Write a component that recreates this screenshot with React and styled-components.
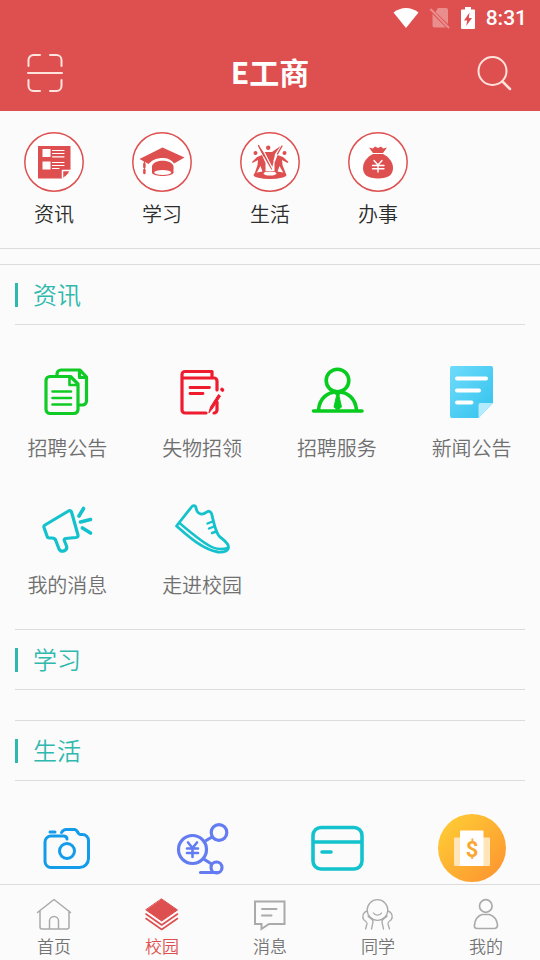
import React from 'react';
import styled, { createGlobalStyle } from 'styled-components';

const RED = '#de5050';
const TEAL = '#2fb9ae';
const CYAN = '#13c2cc';

const GlobalStyle = createGlobalStyle`
  * {
    box-sizing: border-box;
  }
  body {
    margin: 0;
    background: #fbfbfb;
    font-family: "Noto Sans CJK SC", "Noto Sans", sans-serif;
    font-weight: 350;
  }
  button {
    padding: 0;
    border: 0;
    background: none;
    font-family: inherit;
    font-weight: inherit;
    cursor: pointer;
  }
`;

const Page = styled.div`
  display: flex;
  flex-direction: column;
  height: 100vh;
`;

const StatusBar = styled.div`
  display: flex;
  justify-content: flex-end;
  align-items: center;
  gap: 11px;
  height: 36px;
  padding-right: 13px;
  background: ${RED};
  color: white;
  font: 500 21px/36px Roboto, sans-serif;
`;

const Header = styled.header`
  display: grid;
  grid-template-columns: 36px 1fr 36px;
  align-items: center;
  height: 75px;
  padding: 0 27px 2px;
  background: ${RED};
  color: white;
`;

const Title = styled.h1`
  margin: 0;
  padding-bottom: 3px;
  font-size: 30px;
  line-height: 44px;
  font-weight: 700;
  text-align: center;
`;

const HeaderButton = styled.button`
  display: block;
  height: 38px;
  color: #ffe3dc;
`;

const Main = styled.main`
  flex: 1;
  min-height: 0;
  overflow: hidden;
`;

const QuickNav = styled.nav`
  display: grid;
  grid-template-columns: repeat(5, 1fr);
  padding: 21px 0 19px;
`;

const QuickItem = styled.button`
  display: flex;
  flex-direction: column;
  align-items: center;
  gap: 7px;
  color: #2c2c2c;
  font-size: 20px;
  line-height: 30px;
`;

const Divider = styled.div`
  height: 17px;
  border-top: 1px solid #dcdcdc;
  border-bottom: 1px solid #dcdcdc;
`;

const Section = styled.section`
  & + & > header {
    border-top: 1px solid #dcdcdc;
  }
`;

const SectionHead = styled.header`
  margin: 0 15px;
  padding: 18px 0 17px;
  border-bottom: 1px solid #dcdcdc;
`;

const SectionTitle = styled.h2`
  margin: 0;
  padding: 0 0 2px 15px;
  border-left: 3px solid ${TEAL};
  color: ${TEAL};
  font-size: 24px;
  line-height: 22px;
  font-weight: inherit;
`;

const TileGrid = styled.div`
  display: grid;
  grid-template-columns: repeat(4, 1fr);
  padding: 16px 1px 14px 0;
`;

const Tile = styled.button`
  display: flex;
  flex-direction: column;
  align-items: center;
  gap: 7px;
  padding: 17px 0 15px;
  color: #707070;
  font-size: 20px;
  line-height: 30px;
`;

const TabBar = styled.nav`
  display: grid;
  grid-template-columns: repeat(5, 1fr);
  height: 76px;
  border-top: 1px solid #dcdcdc;
`;

const Tab = styled.button`
  display: flex;
  flex-direction: column;
  align-items: center;
  gap: 1px;
  padding-top: 12px;
  color: ${props => props.$active ? RED : '#757575'};
  font-size: 17px;
  line-height: 24px;

  svg {
    color: ${props => props.$active ? RED : '#aaa'};
  }
`;

const Svg = ({ w, h, children, ...rest }) => (
  <svg
    width={w}
    height={h || w}
    viewBox={`0 0 ${w} ${h || w}`}
    fill="none"
    strokeLinecap="round"
    strokeLinejoin="round"
    aria-hidden="true"
    {...rest}
  >
    {children}
  </svg>
);

/* status bar and header */

const WifiIcon = () => (
  <Svg w={26} h={22}>
    <path d="M0.5 5.5C8 -0.5 18 -0.5 25.5 5.5L13 21Z" fill="white" />
  </Svg>
);

const NoSimIcon = () => (
  <Svg w={20} h={22} opacity="0.35">
    <path d="M8 1h8a2 2 0 0 1 2 2v14L5.500 5ZM2.500 7l13.500 13.500H4.500a2 2 0 0 1-2-2Z" fill="white" />
    <path d="M1 2.500L18.500 20.500" stroke="white" strokeWidth="2" />
  </Svg>
);

const BatteryIcon = () => (
  <Svg w={14} h={22}>
    <path d="M4 0h6v2.500h3a1 1 0 0 1 1 1V21a1 1 0 0 1-1 1H1a1 1 0 0 1-1-1V3.500a1 1 0 0 1 1-1h3Z" fill="white" />
    <path d="M8.500 5.500L3 13.500h3.200L5.200 19L11 11H7.800Z" fill={RED} />
  </Svg>
);

const ScanIcon = () => (
  <Svg w={36} h={38} stroke="currentColor" strokeWidth="2">
    <path d="M1.500 12V6a5 5 0 0 1 5-5H13M23 1h6.500a5 5 0 0 1 5 5v6M1.500 26v6a5 5 0 0 0 5 5H13M23 37h6.500a5 5 0 0 0 5-5v-6M1 19h34" />
  </Svg>
);

const SearchIcon = () => (
  <Svg w={36} h={38} stroke="currentColor" strokeWidth="2">
    <circle cx="15.500" cy="17" r="14" />
    <path d="M25.500 27.500L33 35" strokeWidth="2.500" />
  </Svg>
);

/* round icons of the quick navigation */

const Ring = ({ children }) => (
  <Svg w={60}>
    <circle cx="30" cy="30" r="29.200" fill="white" stroke={RED} strokeWidth="1.500" />
    {children}
  </Svg>
);

const NewsRing = () => (
  <Ring>
    <path d="M14 14H46.500V38L38.500 46.500H14Z" fill={RED} />
    <path d="M18.500 17H26.500V25H18.500ZM18.500 29.500H26.500V37.500H18.500Z" fill="white" />
    <path d="M28.500 18.500H40M28.500 21.500H40M28.500 24.800H40M28.500 30.500H40M28.500 33.500H40M28.500 36.500H35" stroke="white" strokeWidth="1.200" />
    <path d="M38.500 46V38.500H46.500" stroke="white" strokeWidth="1.500" />
    <path d="M40.500 45V40.500H45Z" fill={RED} />
  </Ring>
);

const StudyRing = () => (
  <Ring>
    <path d="M7.500 27L30.500 15.500L52.500 25.500L42 31.500C38 24 23 24 16.500 32Z" fill={RED} />
    <path d="M20 34C22 27 39 27 41.500 34V41C39 45 22 45 20 41Z" fill={RED} />
    <ellipse cx="30.700" cy="40.500" rx="8.500" ry="2.400" fill="white" />
    <path d="M12.400 27V41" stroke={RED} strokeWidth="1" />
    <path d="M12.400 32V35M12.400 38V41" stroke={RED} strokeWidth="2.500" />
  </Ring>
);

const LifeRing = () => (
  <Ring>
    <ellipse cx="30" cy="43" rx="16.500" ry="4" fill={RED} />
    <ellipse cx="30" cy="41.500" rx="6.500" ry="2" fill="white" />
    <g fill={RED}>
      <circle cx="15.500" cy="21" r="2" />
      <circle cx="28.200" cy="15.800" r="2.200" />
      <circle cx="44.500" cy="21" r="2" />
      <path d="M12 30L17 25L22 23L25.500 31V39L23 41L20.500 34L16 42H14.500L17.500 33L18 28L12.500 31Z" />
      <path d="M18 14L24 20L32 20L40.500 14L35 22L34 28L31.500 38L24 25Z" />
      <path d="M48.500 30L43 25L37.500 23L34.500 31V39L37 41L39.500 34L44 42H46L42.500 33L42 28L47.500 31Z" />
    </g>
    <path d="M21 14L33 37.500M37.500 21.500L34 28.500" stroke="white" strokeWidth="1.200" />
    <path d="M18.500 13.500L24 24M42 14L37.500 22" stroke={RED} strokeWidth="1.400" />
  </Ring>
);

const WorkRing = () => (
  <Ring>
    <path d="M21 15.500L25 16.500L27 14.500L30 16L33 14.500L35 16.500L39 15.500L35 21H25Z" fill={RED} />
    <path d="M25 22H35C41 25 45 30 45 36C45 43 40 46.500 30 46.500S15 43 15 36C15 30 19 25 25 22Z" fill={RED} />
    <path d="M26 28.500L30 33L34 28.500M24.500 33.500H36M24.500 36.800H36M30 33V40" stroke="white" strokeWidth="1.400" />
  </Ring>
);

/* tile icons */

const CopyDocsIcon = () => (
  <Svg w={68} stroke="#10cb26" strokeWidth="3.200">
    <path d="M24 18V16a4 4 0 0 1 4-4H47L53.500 19V43a4 4 0 0 1-4 4H46" />
    <path d="M46.500 13V19.500H53" />
    <path d="M17 18.500H37.500L45 26V51.500a4 4 0 0 1-4 4H17a4 4 0 0 1-4-4V22.500a4 4 0 0 1 4-4Z" />
    <path d="M36.500 19.500V27H44M19.500 33.500H38M19.500 40H38M19.500 46.500H38" strokeWidth="2.600" />
  </Svg>
);

const NotebookIcon = () => (
  <Svg w={68} stroke="#ee1c2e" strokeWidth="3.200">
    <path d="M49 32V23a3 3 0 0 0-3-3H14M44 19V13.500H17a3 3 0 0 0-3 3V52a3 3 0 0 0 3 3H38M49 44V52a3 3 0 0 1-3 3" />
    <path d="M22 29.500H41.500M22 35.500H35" strokeWidth="2.800" />
    <path d="M41 54.500L42.500 49L50.500 36.500L52.500 38L44.500 50.500Z" fill="#ee1c2e" strokeWidth="1" />
    <path d="M54 31.500L54.500 32" strokeWidth="3.600" />
  </Svg>
);

const ServiceIcon = () => (
  <Svg w={68} stroke="#08cb20" strokeWidth="3.600">
    <circle cx="34.500" cy="22.500" r="11.300" />
    <path d="M15.500 52C16.500 41 23.500 34 34.500 34S52.500 41 53.500 52M10.500 53H59" />
    <path d="M32.500 35.500H36.500L36 38L38.500 49L34.500 52L31 49L33.500 38Z" fill="#08cb20" strokeWidth="1" />
  </Svg>
);

const NoticeIcon = () => (
  <Svg w={68}>
    <defs>
      <linearGradient id="notice" x1="0" y1="0" x2="1" y2="1">
        <stop offset="0" stopColor="#6edbfb" />
        <stop offset="1" stopColor="#33c2ee" />
      </linearGradient>
    </defs>
    <path d="M14 8H53a2 2 0 0 1 2 2V45L40.500 60H14a2 2 0 0 1-2-2V10a2 2 0 0 1 2-2Z" fill="url(#notice)" />
    <path d="M55 45H42.500a2 2 0 0 0-2 2V60Z" fill="#b4ecfd" />
    <path d="M19 20.500H48M19 32.500H41M19 44.500H33.500" stroke="white" strokeWidth="4" />
  </Svg>
);

const MegaphoneIcon = () => (
  <Svg w={68} stroke={CYAN} strokeWidth="3.200">
    <path d="M12 30L35.500 16C37 15.300 38 15.700 38.500 17L45 40C45.300 41.500 44.500 42.300 43 42.500L32.500 43.500C31 43.800 31 45 31.500 46L33.500 51C35 56 28 58 26 54L23 46C22.500 44 21 43 19 43H16.500C15 43 14.300 42.300 14 41L11 32.500C10.700 31.300 11 30.600 12 30Z" />
    <path d="M46 21L50.500 13.500M47.500 27L57.500 24.500M49.500 33L57.500 38" strokeWidth="3.600" />
  </Svg>
);

const ShoeIcon = () => (
  <Svg w={68} stroke={CYAN} strokeWidth="2.800">
    <path d="M8.500 31L23.500 12C25 10 27.500 10.500 28 12.500C28.500 18 33 21 38 17.500C40.500 15.500 42.500 16 43.500 18.500C46 27 46.500 35 51 41C55 45 60 47 60.500 52C60.500 56 56 57.500 50 57C34 54 20 41 8.500 31Z" />
    <path d="M11.500 28C22 37 36 49 45 52.500C51 55 56 54 60 53M39.500 28.500L44.500 26.500M41 33.500L46 31.500M44 38L48.500 36.500" strokeWidth="2.400" />
  </Svg>
);

const CameraIcon = () => (
  <Svg w={68} stroke="#149cea" strokeWidth="3">
    <path d="M34 25C34 23 33 22 30.500 22H18a6 6 0 0 0-6 6V47.500a6 6 0 0 0 6 6H46.500a9 9 0 0 0 9-9V26.500a6 6 0 0 0-6-6H47C45 20.500 44.500 15.500 41.500 15.500H33C30.500 15.500 29.500 17 28.500 18.500M17 18H22" />
    <circle cx="34" cy="37" r="7.500" />
  </Svg>
);

const ShareMoneyIcon = () => (
  <Svg w={68} stroke="#637cf2" strokeWidth="3.200">
    <circle cx="24.500" cy="35.500" r="14" />
    <circle cx="51" cy="18.500" r="7.800" />
    <circle cx="48.500" cy="53.500" r="5.500" />
    <path d="M36.500 27.500L44 23M36.500 45.500L43.500 50M32.500 58.500H50" />
    <path d="M20 28.500L24.500 34L29 28.500M19 34.500H30M19 39H30M24.500 34V43" strokeWidth="2.600" />
  </Svg>
);

const CardIcon = () => (
  <Svg w={68} stroke={CYAN} strokeWidth="3.600">
    <rect x="10" y="13.500" width="49" height="41.500" rx="8" />
    <path d="M10.500 28H58.500M19 38H28" />
  </Svg>
);

const BillIcon = () => (
  <Svg w={68}>
    <defs>
      <linearGradient id="bill" x1="0" y1="0" x2="1" y2="1">
        <stop offset="0.100" stopColor="#fecb35" />
        <stop offset="0.900" stopColor="#fd9730" />
      </linearGradient>
    </defs>
    <circle cx="34" cy="34" r="34" fill="url(#bill)" />
    <rect x="16" y="23.500" width="36" height="28.500" rx="1" fill="#ffe5b8" />
    <rect x="22" y="16.500" width="23.500" height="35.500" rx="1" fill="white" />
    <text x="34" y="42.500" textAnchor="middle" fontFamily="Roboto, sans-serif" fontWeight="700" fontSize="22" fill="#f9a733">$</text>
  </Svg>
);

/* tab bar icons */

const HomeIcon = () => (
  <Svg w={36} stroke="currentColor" strokeWidth="1.500">
    <path d="M1.500 15.500L18 2.500L34.500 15.500M4 14V30a2 2 0 0 0 2 2H31a2 2 0 0 0 2-2V14M13.500 32V24a4.500 4.500 0 0 1 9 0V32" />
  </Svg>
);

const LayersIcon = () => (
  <Svg w={36} stroke="currentColor" strokeWidth="1.500">
    <path d="M17.700 2L33.500 13L17.700 24L2 13Z" fill="currentColor" strokeWidth="1" />
    <path d="M2 17L17.700 28L33.500 17M2 21.500L17.700 32.500L33.500 21.500" strokeWidth="1.600" />
  </Svg>
);

const ChatIcon = () => (
  <Svg w={36} stroke="currentColor" strokeWidth="2" strokeLinejoin="miter">
    <path d="M3 4.500H32.500V27H17L9.500 32V27H3ZM10 12H24.500M10 18.500H19.500" />
  </Svg>
);

const ClassmateIcon = () => (
  <Svg w={36} stroke="currentColor" strokeWidth="1.300">
    <circle cx="17.500" cy="13" r="10.300" />
    <path d="M13.500 16C15 18.800 20 18.800 21.500 16" />
    <path d="M7 14C3 15 1.500 20 4 23C6 24.500 7.500 25 7 27L5.500 32M8 19C9.500 21 13.500 22 13 25L11.500 32M28 14C32 15 33.500 20 31 23C29 24.500 27.500 25 28 27L29.500 32M27 19C25.500 21 21.500 22 22 25L23.500 32" />
  </Svg>
);

const PersonIcon = () => (
  <Svg w={36} stroke="currentColor" strokeWidth="1.700">
    <circle cx="17.800" cy="9" r="6.300" />
    <path d="M14 17.500H21.500C26 19 29 23 29.500 28C29.500 30.500 28.500 31.500 26 31.500H9.500C7 31.500 6 30.500 6.500 28C7 23 9.500 19 14 17.500Z" />
  </Svg>
);

const quickItems = [
  { label: '资讯', icon: <NewsRing /> },
  { label: '学习', icon: <StudyRing /> },
  { label: '生活', icon: <LifeRing /> },
  { label: '办事', icon: <WorkRing /> },
];

const sections = [
  {
    title: '资讯',
    tiles: [
      { label: '招聘公告', icon: <CopyDocsIcon /> },
      { label: '失物招领', icon: <NotebookIcon /> },
      { label: '招聘服务', icon: <ServiceIcon /> },
      { label: '新闻公告', icon: <NoticeIcon /> },
      { label: '我的消息', icon: <MegaphoneIcon /> },
      { label: '走进校园', icon: <ShoeIcon /> },
    ],
  },
  { title: '学习', tiles: [] },
  {
    title: '生活',
    tiles: [
      { name: '相机', icon: <CameraIcon /> },
      { name: '转账', icon: <ShareMoneyIcon /> },
      { name: '校园卡', icon: <CardIcon /> },
      { name: '账单', icon: <BillIcon /> },
    ],
  },
];

const tabs = [
  { label: '首页', icon: <HomeIcon /> },
  { label: '校园', icon: <LayersIcon />, active: true },
  { label: '消息', icon: <ChatIcon /> },
  { label: '同学', icon: <ClassmateIcon /> },
  { label: '我的', icon: <PersonIcon /> },
];

const App = () => (
  <Page>
    <GlobalStyle />
    <StatusBar>
      <WifiIcon />
      <NoSimIcon />
      <BatteryIcon />
      <span>8:31</span>
    </StatusBar>
    <Header>
      <HeaderButton aria-label="扫一扫"><ScanIcon /></HeaderButton>
      <Title>E工商</Title>
      <HeaderButton aria-label="搜索"><SearchIcon /></HeaderButton>
    </Header>
    <Main>
      <QuickNav>
        {quickItems.map(item => (
          <QuickItem key={item.label}>
            {item.icon}
            <span>{item.label}</span>
          </QuickItem>
        ))}
      </QuickNav>
      <Divider />
      {sections.map(section => (
        <Section key={section.title}>
          <SectionHead>
            <SectionTitle>{section.title}</SectionTitle>
          </SectionHead>
          <TileGrid>
            {section.tiles.map(tile => (
              <Tile key={tile.label || tile.name} aria-label={tile.name}>
                {tile.icon}
                {tile.label && <span>{tile.label}</span>}
              </Tile>
            ))}
          </TileGrid>
        </Section>
      ))}
    </Main>
    <TabBar>
      {tabs.map(tab => (
        <Tab key={tab.label} $active={tab.active}>
          {tab.icon}
          <span>{tab.label}</span>
        </Tab>
      ))}
    </TabBar>
  </Page>
);

export default App;
